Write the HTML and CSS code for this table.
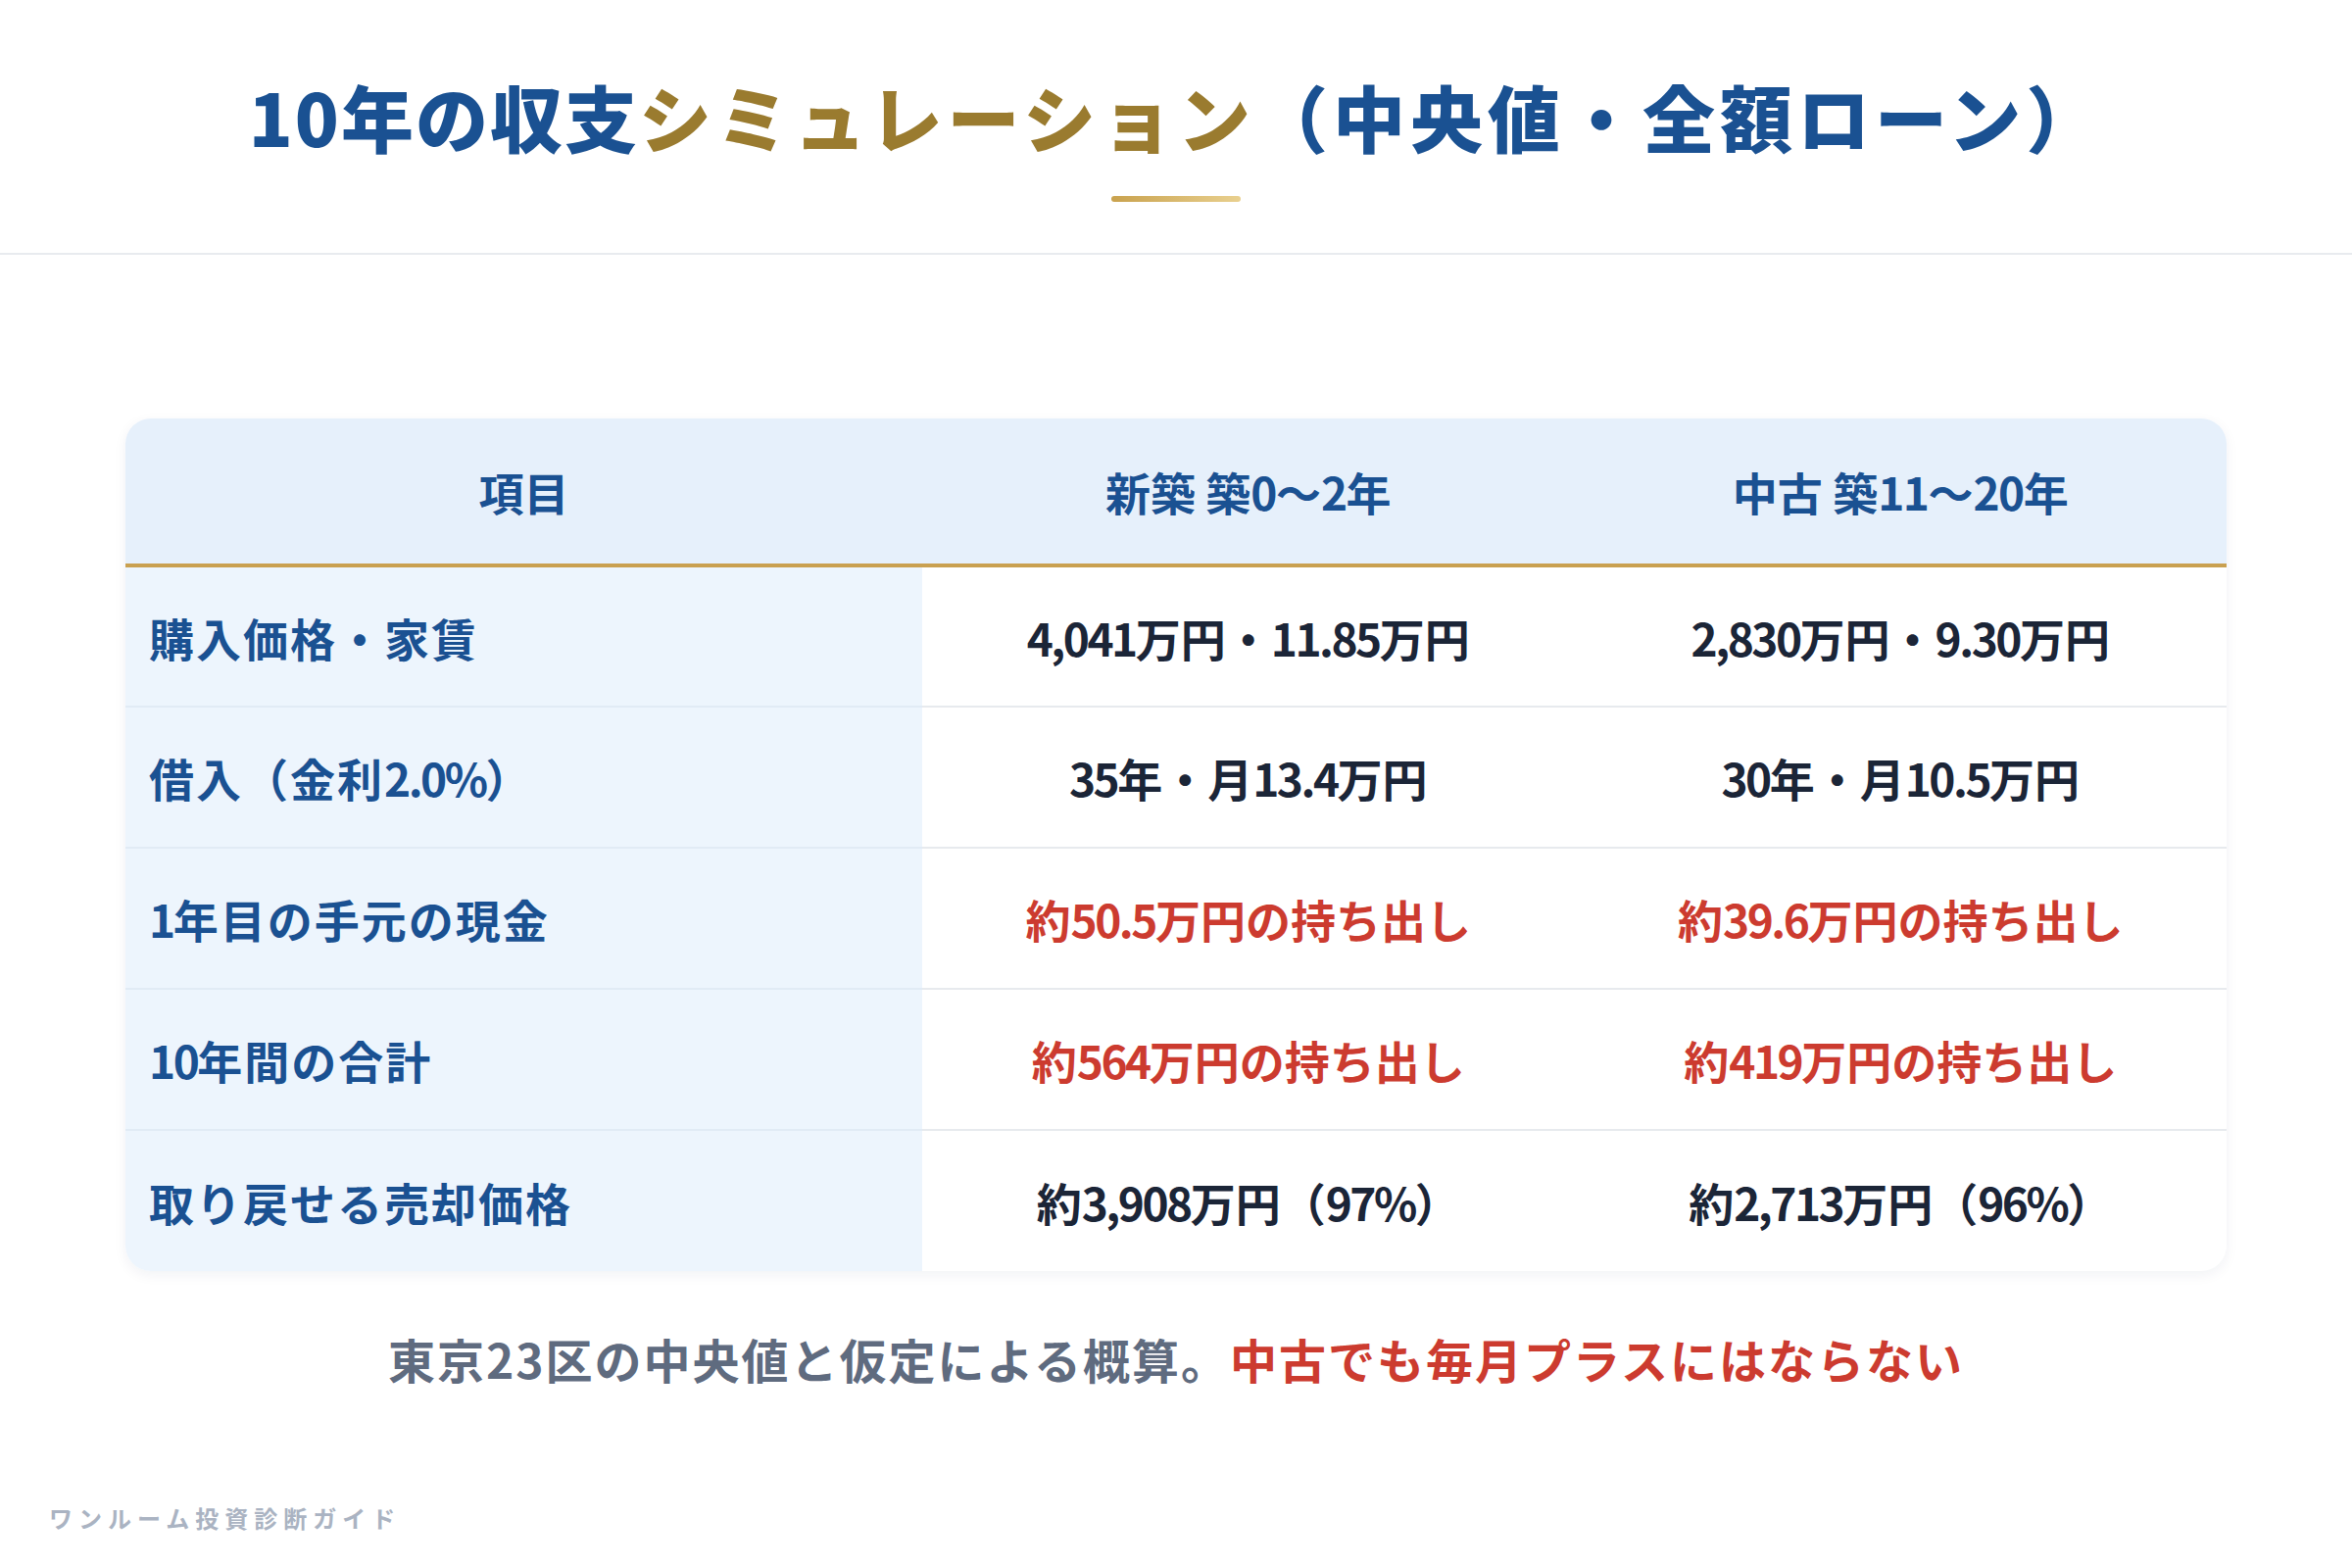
FILE: index.html
```html
<!DOCTYPE html>
<html lang="ja">
<head>
<meta charset="utf-8">
<title>10年の収支シミュレーション</title>
<link rel="stylesheet" href="styles.css">
</head>
<body>
<div class="page">
  <header class="head">
    <h1 class="title"><span class="t-blue">10年の収支</span><span class="t-gold t-wide">シミュレーション</span><span class="t-blue t-wide">（中央値・全額ローン）</span></h1>
    <div class="underline"></div>
  </header>
  <main class="main">
    <div class="card">
      <table class="tbl">
        <thead>
          <tr>
            <th class="c1">項目</th>
            <th>新築 築<span class="num">0</span>〜<span class="num">2</span>年</th>
            <th>中古 築<span class="num">11</span>〜<span class="num">20</span>年</th>
          </tr>
        </thead>
        <tbody>
          <tr>
            <td class="c1">購入価格・家賃</td>
            <td><span class="num">4,041</span>万円・<span class="num">11.85</span>万円</td>
            <td><span class="num">2,830</span>万円・<span class="num">9.30</span>万円</td>
          </tr>
          <tr>
            <td class="c1">借入（金利<span class="num">2.0%</span>）</td>
            <td><span class="num">35</span>年・月<span class="num">13.4</span>万円</td>
            <td><span class="num">30</span>年・月<span class="num">10.5</span>万円</td>
          </tr>
          <tr>
            <td class="c1"><span class="num">1</span>年目の手元の現金</td>
            <td class="neg">約<span class="num">50.5</span>万円の持ち出し</td>
            <td class="neg">約<span class="num">39.6</span>万円の持ち出し</td>
          </tr>
          <tr>
            <td class="c1"><span class="num">10</span>年間の合計</td>
            <td class="neg">約<span class="num">564</span>万円の持ち出し</td>
            <td class="neg">約<span class="num">419</span>万円の持ち出し</td>
          </tr>
          <tr>
            <td class="c1">取り戻せる売却価格</td>
            <td>約<span class="num">3,908</span>万円（<span class="num">97%</span>）</td>
            <td>約<span class="num">2,713</span>万円（<span class="num">96%</span>）</td>
          </tr>
        </tbody>
      </table>
    </div>
    <p class="note">東京23区の中央値と仮定による概算。<strong class="note-red">中古でも毎月プラスにはならない</strong></p>
  </main>
  <footer class="foot">ワンルーム投資診断ガイド</footer>
</div>
</body>
</html>
```
FILE: styles.css
```css
* { box-sizing: border-box; }
html, body { margin: 0; padding: 0; background: #ffffff; }
body {
  font-family: "Noto Sans CJK JP", "Noto Sans", sans-serif;
  color: #1b2537;
}
.page {
  width: 2400px;
  height: 1600px;
  display: flex;
  flex-direction: column;
}
.head {
  height: 260px;
  border-bottom: 2px solid #e8ebef;
  padding-top: 73px;
  display: flex;
  flex-direction: column;
  align-items: center;
}
.title {
  margin: 0;
  font-size: 74px;
  line-height: 89px;
  font-weight: 900;
  letter-spacing: 2px;
  white-space: nowrap;
}
.t-blue { color: #1a5192; }
.t-gold { color: #9a7b2f; }
.t-wide { letter-spacing: 5px; }
.underline {
  margin-top: 38px;
  width: 132px;
  height: 6px;
  border-radius: 3px;
  background: linear-gradient(90deg, #c9a24e, #e9d08f);
}
.main {
  padding: 167px 128px 0;
  display: flex;
  flex-direction: column;
  align-items: center;
}
.card {
  width: 2144px;
  border-radius: 26px;
  overflow: hidden;
  background: #ffffff;
  box-shadow: 0 4px 14px rgba(20, 40, 80, 0.06);
}
.tbl {
  width: 100%;
  border-collapse: collapse;
  table-layout: fixed;
}
.tbl th {
  height: 150px;
  background: #e6f0fb;
  color: #1a5192;
  font-size: 46px;
  font-weight: 700;
  text-align: center;
  border-bottom: 4px solid #c9a050;
  padding: 0;
}
.tbl th.c1 { width: 813px; }
.tbl td {
  height: 144px;
  font-size: 46px;
  font-weight: 700;
  text-align: center;
  color: #1b2537;
  border-bottom: 2px solid #e7eaee;
  padding: 0;
}
.tbl tbody tr:last-child td { border-bottom: none; }
.tbl td.c1 {
  text-align: left;
  padding-left: 24px;
  background: #edf5fd;
  color: #1a5192;
  letter-spacing: 2px;
  border-bottom-color: #e1ebf5;
}
.tbl td.neg { color: #cc3b2f; }
.num { letter-spacing: -2.5px; }
.tbl th .num { letter-spacing: -1.5px; }
.note {
  margin: 56px 0 0;
  font-size: 48px;
  line-height: 67px;
  font-weight: 700;
  color: #5f6b7f;
  letter-spacing: 2px;
}
.note-red { color: #cc3b2f; font-weight: 700; }
.foot {
  margin-top: auto;
  padding: 0 0 36px 50px;
  font-size: 24px;
  line-height: 30px;
  font-weight: 700;
  letter-spacing: 6px;
  color: #aab3c2;
}
```
